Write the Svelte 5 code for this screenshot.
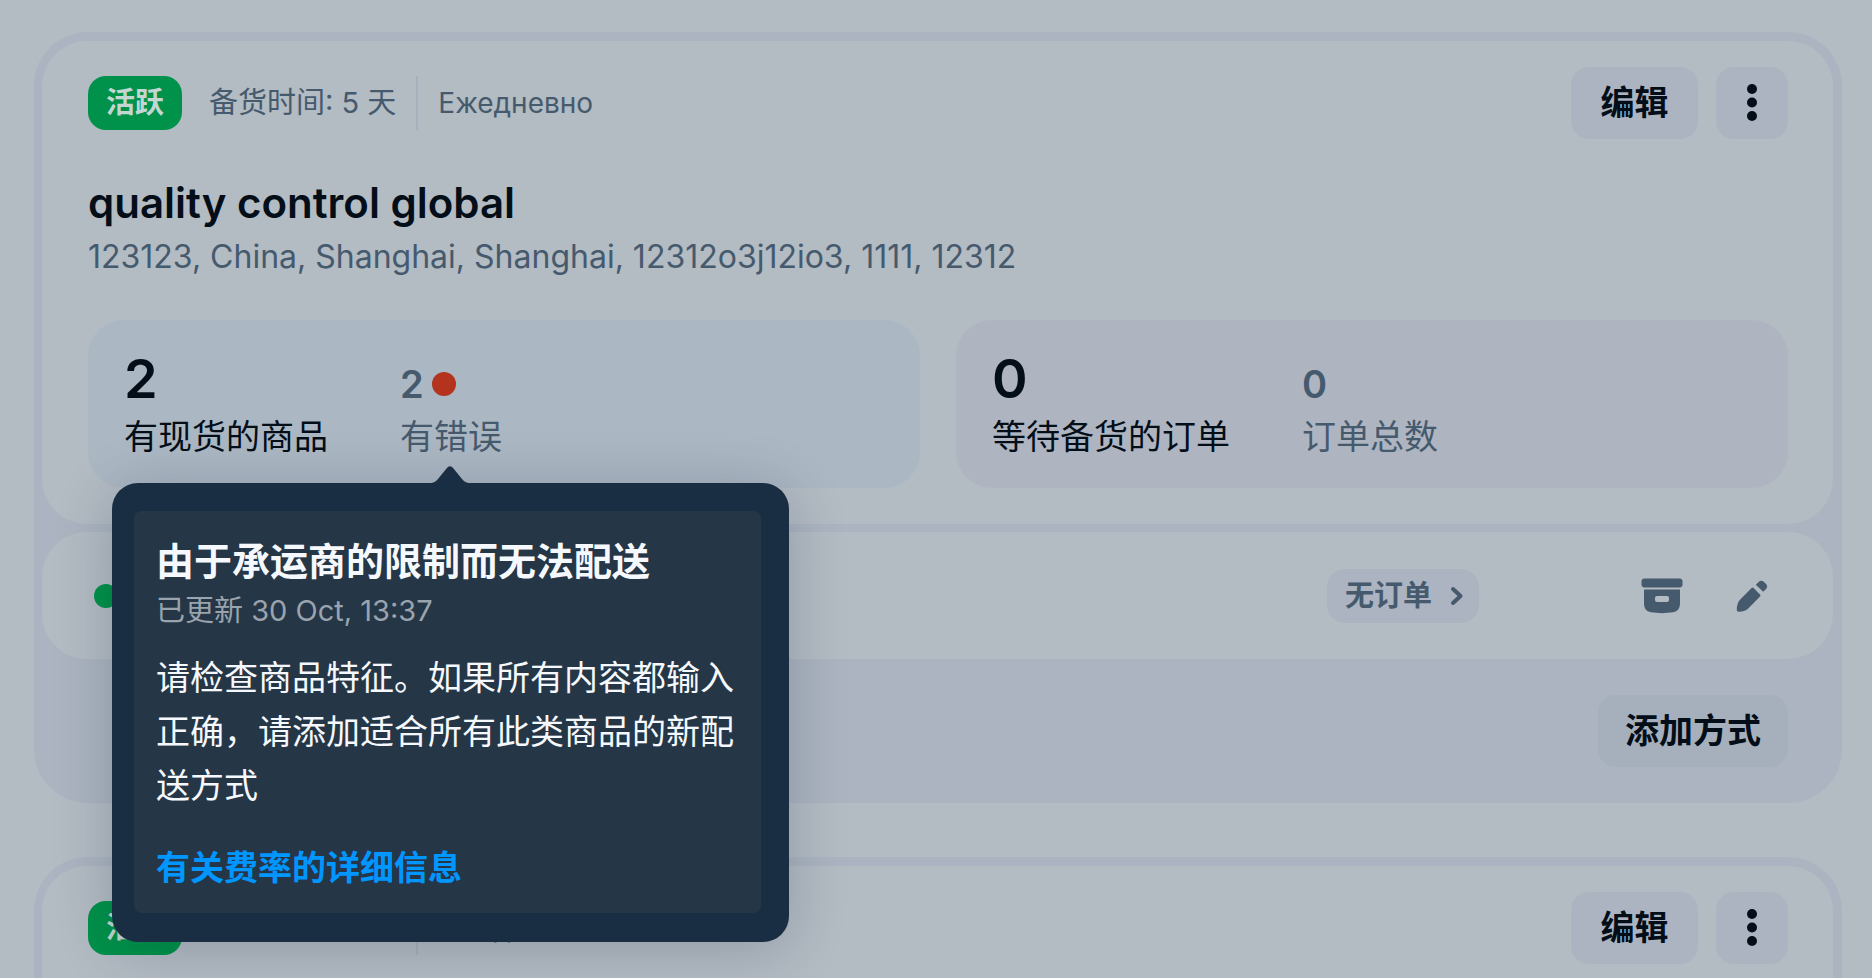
<script>
  const warehouses = [
    {
      id: 1,
      status: '活跃',
      prep: '备货时间: 5 天',
      schedule: 'Ежедневно',
      details: {
        name: 'quality control global',
        address: '123123, China, Shanghai, Shanghai, 12312o3j12io3, 1111, 12312',
        stock: 2,
        errors: 2,
        pending: 0,
        total: 0
      }
    },
    {
      id: 2,
      status: '活跃',
      prep: '备货时间: 5 天',
      schedule: 'Ежедневно',
      details: null
    }
  ];
</script>

<main>
  {#each warehouses as w (w.id)}
    {@const d = w.details}
    <article class="card">
      <section class="panel" class:pending={!d}>
        <header>
          <span class="badge">{w.status}</span>
          <span class="meta">{w.prep}</span>
          <span class="meta schedule">{w.schedule}</span>
          <div class="actions">
            <button class="btn">编辑</button>
            <button class="btn square" aria-label="更多">
              <svg width="36" height="40" viewBox="0 0 36 40" fill="currentColor">
                <circle cx="18" cy="6" r="5" />
                <circle cx="18" cy="19.500" r="5" />
                <circle cx="18" cy="33" r="5" />
              </svg>
            </button>
          </div>
        </header>
        {#if d}
          <h2>{d.name}</h2>
          <p class="address">{d.address}</p>
          <div class="stats">
            <div class="stat blue">
              <div class="figure">
                <div class="value">{d.stock}</div>
                <div class="label">有现货的商品</div>
              </div>
              <div class="figure minor">
                <div class="value">{d.errors}<i class="dot red"></i></div>
                <div class="label">有错误</div>
                <div class="tooltip" role="tooltip">
                  <svg class="arrow" width="46" height="20" viewBox="0 0 46 20">
                    <path d="M0 20V18.500C5 18.500 8 17.500 11 14L19.500 3.500Q23 -1 26.500 3.500L35 14C38 17.500 41 18.500 46 18.500V20Z" fill="#1a2e43" />
                  </svg>
                  <div class="note">
                    <h3>由于承运商的限制而无法配送</h3>
                    <p class="date">已更新 30 Oct, 13:37</p>
                    <p class="body">请检查商品特征。如果所有内容都输入正确，请添加适合所有此类商品的新配送方式</p>
                    <a href="#rates">有关费率的详细信息</a>
                  </div>
                </div>
              </div>
            </div>
            <div class="stat violet">
              <div class="figure">
                <div class="value">{d.pending}</div>
                <div class="label">等待备货的订单</div>
              </div>
              <div class="figure minor">
                <div class="value">{d.total}</div>
                <div class="label">订单总数</div>
              </div>
            </div>
          </div>
        {/if}
      </section>
      {#if d}
        <section class="method">
          <i class="dot green"></i>
          <button class="orders">
            无订单
            <svg width="14" height="20" viewBox="0 0 14 20" fill="none" stroke="currentColor" stroke-width="4" stroke-linecap="round" stroke-linejoin="round">
              <path d="M3 3L10.500 10L3 17" />
            </svg>
          </button>
          <div class="tools">
            <button class="icon" aria-label="归档">
              <svg width="42" height="36" viewBox="0 0 42 36" fill="currentColor">
                <rect x="0.500" y="0.500" width="41" height="9" rx="3" />
                <path fill-rule="evenodd" d="M3 11.500H39V25C39 30 37 33.500 32 34.300C25 35.400 17 35.400 10 34.300C5 33.500 3 30 3 25ZM16 18Q14 18 14 20V22Q14 24 16 24H26Q28 24 28 22V20Q28 18 26 18Z" />
              </svg>
            </button>
            <button class="icon" aria-label="修改">
              <svg width="32" height="32" viewBox="0 0 32 32" fill="currentColor">
                <path d="M22.600 2Q25.200 -.400 28 2L29.600 3.600Q32.400 6.400 30 9L27.200 11.800L19.800 4.700Z" />
                <path d="M17.600 8L24 14.400Q25 15.400 24 16.400L12.500 28.200C9.500 31 6 31.800 2.500 31.700Q.800 31.600.800 29.900C.800 26 1.500 22.500 4.200 19.600L15.600 8Q16.600 7 17.600 8Z" />
              </svg>
            </button>
          </div>
        </section>
        <footer>
          <button class="btn add">添加方式</button>
        </footer>
      {/if}
    </article>
  {/each}
</main>

<style>
  :global(html),
  :global(body) {
    height: 100%;
    overflow: hidden;
    background: #b3bbc3;
  }
  main {
    --ink: #040e18;
    --muted: #465a6e;
    --fill: #abb4c0;
    display: flex;
    flex-direction: column;
    gap: 54px;
    padding: 32px 30px 0 34px;
    font-family: Inter, 'Noto Sans CJK SC', sans-serif;
    font-size: 34px;
    line-height: 54px;
    color: var(--ink);
  }
  h2,
  h3,
  p {
    margin: 0;
  }
  button {
    font: inherit;
    color: inherit;
    border: 0;
    padding: 0;
    cursor: pointer;
  }
  svg {
    display: block;
  }
  .card {
    display: flex;
    flex-direction: column;
    gap: 8px;
    padding: 9px 9px 0 8px;
    border-radius: 54px;
    background: var(--fill);
  }
  .panel,
  .method {
    border-radius: 45px;
    background: #b3bbc3;
  }
  .panel {
    padding: 27px 45px 36px 46px;
  }
  .pending {
    min-height: 420px;
  }
  header {
    display: flex;
    align-items: center;
    height: 70px;
    padding-bottom: 2px;
  }
  .badge {
    padding: 0 18px;
    border-radius: 18px;
    background: #00924a;
    color: #c3d6d2;
    font-size: 29px;
    font-weight: 700;
  }
  .meta {
    padding: 0 20px 0 27px;
    font-size: 29px;
    color: var(--muted);
  }
  .schedule {
    padding: 0 0 0 20px;
    border-left: 2px solid #a6b0bc;
    font-size: 28px;
  }
  .actions {
    display: flex;
    gap: 18px;
    margin-left: auto;
  }
  .btn {
    min-width: 127px;
    height: 72px;
    padding: 0 27px;
    border-radius: 18px;
    background: var(--fill);
    font-weight: 700;
  }
  .square {
    display: grid;
    place-items: center;
    min-width: 72px;
    padding: 0;
  }
  h2 {
    margin-top: 36px;
    font-size: 42px;
    font-weight: 600;
    line-height: 54px;
  }
  .address {
    color: var(--muted);
    font-size: 32px;
  }
  .stats {
    display: grid;
    grid-template-columns: 1fr 1fr;
    gap: 36px;
    margin-top: 36px;
  }
  .stat {
    display: flex;
    gap: 72px;
    padding: 32px 36px 24px;
    border-radius: 36px;
  }
  .blue {
    background: #abb7c3;
  }
  .violet {
    background: #aeb5c1;
  }
  .figure {
    position: relative;
  }
  .value {
    display: flex;
    align-items: center;
    gap: 8px;
    height: 58px;
    font-size: 54px;
    font-weight: 600;
    line-height: 56px;
  }
  .value {
    box-sizing: border-box;
    padding-bottom: 4px;
  }
  .minor {
    color: var(--muted);
  }
  .minor .value {
    padding: 6px 0 0;
    font-size: 38px;
  }
  .dot {
    width: 24px;
    height: 24px;
    border-radius: 12px;
  }
  .red {
    background: #b3331d;
  }
  .green {
    background: #00924a;
  }
  .method {
    display: flex;
    align-items: center;
    height: 127px;
    padding: 0 54px 0 52px;
  }
  .orders {
    display: flex;
    align-items: center;
    gap: 18px;
    height: 54px;
    margin-left: auto;
    padding: 0 15px 0 18px;
    border-radius: 18px;
    background: var(--fill);
    color: var(--muted);
    font-size: 29px;
    font-weight: 700;
  }
  .tools {
    display: flex;
    gap: 36px;
    margin-left: 156px;
  }
  .icon {
    display: grid;
    place-items: center;
    width: 54px;
    height: 54px;
    background: none;
    color: var(--muted);
  }
  footer {
    display: flex;
    justify-content: flex-end;
    padding: 28px 45px 36px;
  }
  .add {
    background: #a6b0bd;
  }
  .tooltip {
    position: absolute;
    z-index: 2;
    top: 131px;
    left: -288px;
    box-sizing: border-box;
    width: 677px;
    padding: 28px 28px 29px 22px;
    border-radius: 26px;
    background: #1a2e43;
    box-shadow: 0 7px 60px rgba(0, 20, 40, 0.2);
  }
  .arrow {
    position: absolute;
    top: -18px;
    left: 315px;
  }
  .note {
    padding: 22px 24px 18px 22px;
    border-radius: 8px;
    background: #253647;
    color: #f5f8fc;
  }
  h3 {
    font-size: 38px;
    font-weight: 700;
    line-height: 56px;
  }
  .date {
    margin-bottom: 18px;
    color: #9aa4ae;
    font-size: 29px;
    line-height: 44px;
  }
  .note a {
    display: block;
    margin-top: 28px;
    color: #0096ff;
    font-weight: 700;
    text-decoration: none;
  }
</style>
